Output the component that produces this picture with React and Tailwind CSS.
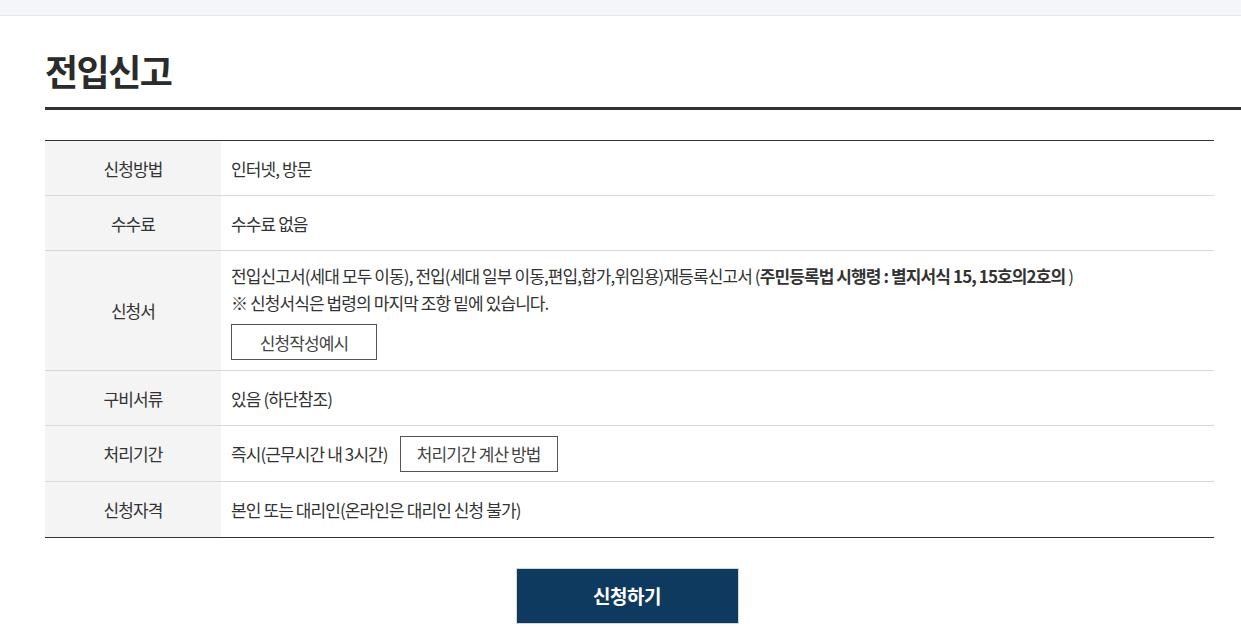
import React from "react";

const rows = [
  { label: "신청방법", body: "인터넷, 방문", h: "min-h-[54px]" },
  { label: "수수료", body: "수수료 없음", h: "min-h-[54px]" },
  { label: "신청서", body: "form", h: "min-h-[54px]" },
  { label: "구비서류", body: "있음 (하단참조)", h: "min-h-[54px]" },
  { label: "처리기간", body: "period", h: "min-h-[55px]" },
  { label: "신청자격", body: "본인 또는 대리인(온라인은 대리인 신청 불가)", h: "min-h-[55px]" },
];

function Body({ type }) {
  if (type === "form") {
    return (
      <div className="pt-[11px] pb-[10px] leading-[27px]">
        <p>
          전입신고서(세대 모두 이동), 전입(세대 일부 이동,편입,합가,위임용)재등록신고서 (
          <b className="font-bold">주민등록법 시행령 : 별지서식 15, 15호의2호의</b> )
        </p>
        <p>※ 신청서식은 법령의 마지막 조항 밑에 있습니다.</p>
        <button className="mt-2 h-9 w-[146px] border border-[#555] bg-white leading-none text-[#444]">
          신청작성예시
        </button>
      </div>
    );
  }
  if (type === "period") {
    return (
      <div className="flex items-center gap-[12px]">
        <span>즉시(근무시간 내 3시간)</span>
        <button className="h-9 w-[158px] border border-[#555] bg-white leading-none text-[#444]">
          처리기간 계산 방법
        </button>
      </div>
    );
  }
  return <span>{type}</span>;
}

export default function App() {
  return (
    <div
      className="min-h-screen bg-white text-[#333]"
      style={{ fontFamily: '"Noto Sans CJK KR", "Noto Sans", sans-serif' }}
    >
      <div className="h-[16px] border-b border-[#e6e7eb] bg-[#f5f6fa]" />

      <div className="pl-[45px]">
        <h1 className="flex h-[91px] items-end pb-[19px] text-[36px] font-bold leading-none tracking-[-1.5px] text-[#2b2b2b]">
          전입신고
        </h1>
        <div className="h-[3px] bg-[#333]" />
      </div>

      <div className="ml-[45px] mr-[27px] mt-[30px] border-t border-b border-t-[#333] border-b-[#333] text-[17px] leading-[27px] tracking-[-0.9px]">
        {rows.map((r, i) => (
          <div
            key={r.label}
            className={`flex ${i > 0 ? "border-t border-[#d8d8d8]" : ""}`}
          >
            <div className={`flex ${r.h} w-[176px] shrink-0 items-center justify-center bg-[#f4f4f4]`}>
              {r.label}
            </div>
            <div className={`flex ${r.h} flex-1 items-center pl-[10px]`}>
              <Body type={r.body} />
            </div>
          </div>
        ))}
      </div>

      <div className="ml-[45px] mr-[27px] mt-[30px] flex justify-center pr-[5px]">
        <button className="h-[56px] w-[223px] border border-[#d6d6d6] bg-[#0f3a60] text-[19px] font-bold tracking-[-0.5px] text-white">
          신청하기
        </button>
      </div>
    </div>
  );
}
